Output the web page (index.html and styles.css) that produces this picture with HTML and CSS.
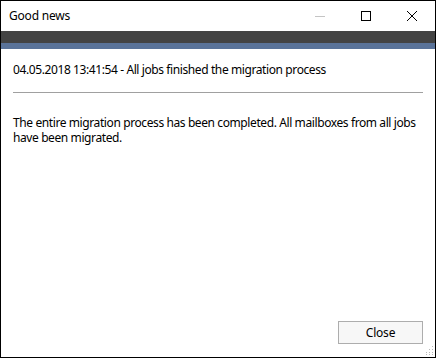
FILE: index.html
```html
<!DOCTYPE html>
<html>
<head>
<meta charset="utf-8">
<link rel="stylesheet" href="styles.css">
</head>
<body>
<div class="window">
  <div class="titlebar">
    <div class="title">Good news</div>
    <div class="controls">
      <div class="ctl"><svg width="10" height="10" viewBox="0 0 10 10"><line x1="0" y1="5.5" x2="10" y2="5.5" stroke="#c4c4c4" stroke-width="1"/></svg></div>
      <div class="ctl"><svg width="10" height="10" viewBox="0 0 10 10"><rect x="0.5" y="0.5" width="9" height="9" fill="none" stroke="#000" stroke-width="1"/></svg></div>
      <div class="ctl"><svg width="10" height="10" viewBox="0 0 10 10"><path d="M0 0 L10 10 M10 0 L0 10" stroke="#000" stroke-width="1"/></svg></div>
    </div>
  </div>
  <div class="darkbar"></div>
  <div class="bluebar"></div>
  <div class="content">
    <div class="heading">04.05.2018 13:41:54 - All jobs finished the migration process</div>
    <div class="sep"></div>
    <div class="message">The entire migration process has been completed. All mailboxes from all jobs have been migrated.</div>
    <div class="footer">
      <button class="btn">Close</button>
    </div>
  </div>
  <svg class="grip" width="10" height="10" viewBox="0 0 10 10">
    <g fill="#b8b8b8">
      <rect x="8" y="0" width="1" height="1"/>
      <rect x="8" y="3" width="1" height="1"/><rect x="5" y="3" width="1" height="1"/>
      <rect x="8" y="6" width="1" height="1"/><rect x="5" y="6" width="1" height="1"/><rect x="2" y="6" width="1" height="1"/>
      <rect x="8" y="8" width="1" height="1"/><rect x="5" y="8" width="1" height="1"/><rect x="2" y="8" width="1" height="1"/>
    </g>
  </svg>
</div>
</body>
</html>
```
FILE: styles.css
```css
html, body {
  margin: 0;
  padding: 0;
  background: #fff;
}
.window {
  position: relative;
  box-sizing: border-box;
  width: 436px;
  height: 358px;
  border: 1px solid #000;
  background: #fff;
  display: flex;
  flex-direction: column;
  font-family: "Noto Sans", "Open Sans", sans-serif;
  font-size: 12px;
  color: #000;
}
.titlebar {
  height: 30px;
  display: flex;
  align-items: center;
  justify-content: space-between;
  background: #fff;
}
.title {
  padding-left: 8px;
  font-size: 12px;
  letter-spacing: -0.2px;
  margin-top: -1px;
}
.controls {
  display: flex;
  height: 30px;
}
.ctl {
  width: 46px;
  height: 30px;
  display: flex;
  align-items: center;
  justify-content: center;
}
.ctl svg { display: block; margin-top: -1px; }
.darkbar {
  height: 12px;
  background: #434343;
}
.bluebar {
  height: 6px;
  background: #5a7399;
}
.content {
  flex: 1;
  display: flex;
  flex-direction: column;
  padding: 12px 12px 12px 12px;
}
.heading {
  line-height: 16px;
  letter-spacing: -0.4px;
  margin-top: 1px;
}
.sep {
  height: 1px;
  background: #a0a0a0;
  margin-top: 14px;
}
.message {
  margin-top: 22px;
  line-height: 15px;
  letter-spacing: -0.4px;
}
.footer {
  margin-top: auto;
  display: flex;
  justify-content: flex-end;
  padding-bottom: 1px;
}
.btn {
  width: 85px;
  height: 23px;
  box-sizing: border-box;
  border: 1px solid #adadad;
  background: #f7f7f7;
  font-family: "Noto Sans", "Open Sans", sans-serif;
  font-size: 12px;
  color: #000;
  padding: 0;
  margin: 0;
  letter-spacing: -0.2px;
}
.grip {
  position: absolute;
  right: 1px;
  bottom: 1px;
}
```
